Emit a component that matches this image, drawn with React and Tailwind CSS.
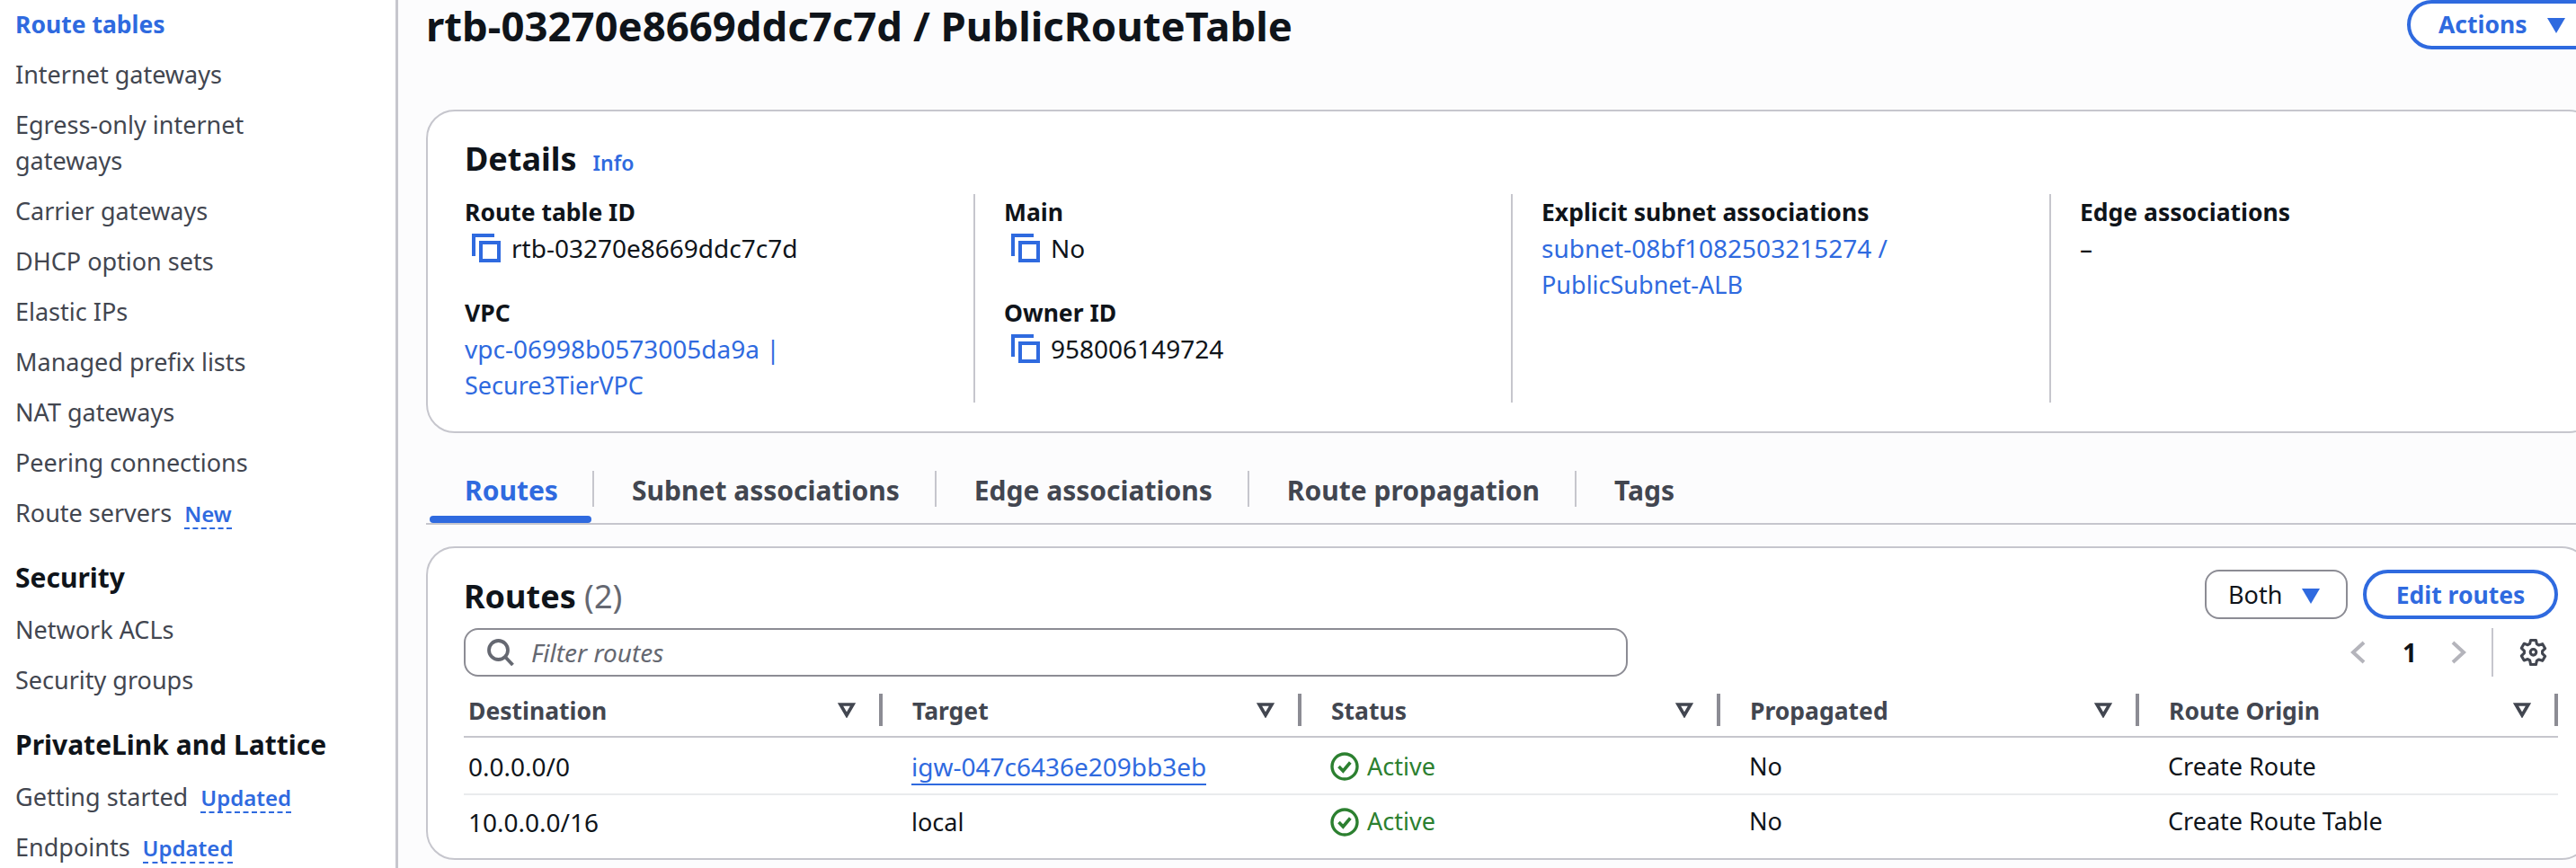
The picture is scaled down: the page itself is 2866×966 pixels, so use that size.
function Copy() {
  return (
    <svg width="32" height="32" viewBox="0 0 32 32" className="shrink-0" fill="none" stroke="#2f6adf" strokeWidth="4">
      <path d="M25 2H2V25" />
      <rect x="10" y="10" width="20" height="20" />
    </svg>
  );
}

function Caret() {
  return (
    <svg width="20" height="18" viewBox="0 0 20 18" className="shrink-0"><path d="M0 1h20L10 18z" fill="#2f6adf" /></svg>
  );
}

function SortIcon() {
  return (
    <svg width="20" height="17" viewBox="0 0 20 17" className="shrink-0" fill="none" stroke="#424650" strokeWidth="3.6"><path d="M3 2h14l-7 12z" /></svg>
  );
}

function Check() {
  return (
    <svg width="32" height="32" viewBox="0 0 32 32" fill="none" stroke="#2c8030" className="shrink-0">
      <circle cx="16" cy="16" r="14" strokeWidth="3.4" />
      <path d="M9.5 16l4.8 5 8-9.5" strokeWidth="3.6" />
    </svg>
  );
}

function Gear() {
  return (
    <svg width="31" height="32" viewBox="0 0 16 16" fill="none" stroke="#424650" strokeWidth="1.6" strokeLinejoin="round">
      <path d="M6.5 1h3l.5 2.2 1.2.7 2.1-.7 1.5 2.6-1.6 1.5v1.4l1.6 1.5-1.5 2.6-2.1-.7-1.2.7-.5 2.2h-3L6 12.6l-1.2-.7-2.1.7-1.5-2.6 1.6-1.5V7.1L1.2 5.6l1.5-2.6 2.1.7L6 3z" />
      <circle cx="8" cy="7.9" r="1.7" />
    </svg>
  );
}

const NavItem = ({ children, badge }) => (
  <div className="flex items-baseline text-[27px] leading-[40px] text-[#424650]">
    <span>{children}</span>
    {badge && (
      <span className="ml-[14px] text-[24px] leading-[30px] font-semibold text-[#2f6adf] border-b-2 border-dashed border-[#2f6adf]">{badge}</span>
    )}
  </div>
);

const Field = ({ label, children, className = "" }) => (
  <div className={className}>
    <div className="text-[26.5px] leading-[40px] font-bold text-[#0f141a]">{label}</div>
    {children}
  </div>
);

const Copyable = ({ children }) => (
  <div className="flex items-center h-[40px] pl-[8px] gap-[12px] text-[28px] leading-[40px] text-[#0f141a]">
    <Copy />
    <span>{children}</span>
  </div>
);

const Cell = ({ first, children, className = "" }) => (
  <div className={`w-[466px] shrink-0 ${first ? "pl-[5px]" : "pl-[32px]"} ${className}`}>{children}</div>
);

const headers = ["Destination", "Target", "Status", "Propagated", "Route Origin"];
const rows = [
  { dest: "0.0.0.0/0", target: "igw-047c6436e209bb3eb", link: true, origin: "Create Route", h: "h-[64px] pt-[2px] border-b-2 border-[#e9ebed]" },
  { dest: "10.0.0.0/16", target: "local", link: false, origin: "Create Route Table", h: "h-[58px] pt-[1px]" },
];

export default function App() {
  return (
    <div className="flex w-[2866px] h-[966px] overflow-hidden bg-[#fcfcfd] font-['Noto_Sans',sans-serif] antialiased">
      <aside className="w-[443px] shrink-0 h-full bg-white border-r-[3px] border-[#c6c6cd] pl-[17px] pr-[60px] overflow-hidden">
        <div className="flex flex-col gap-[16px] pt-[7px]">
          <div className="text-[26.5px] leading-[40px] font-bold text-[#2f6adf]">Route tables</div>
          <NavItem>Internet gateways</NavItem>
          <NavItem>Egress-only internet gateways</NavItem>
          <NavItem>Carrier gateways</NavItem>
          <NavItem>DHCP option sets</NavItem>
          <NavItem>Elastic IPs</NavItem>
          <NavItem>Managed prefix lists</NavItem>
          <NavItem>NAT gateways</NavItem>
          <NavItem>Peering connections</NavItem>
          <NavItem badge="New">Route servers</NavItem>
        </div>
        <div className="mt-[32px] text-[30px] leading-[40px] font-bold text-[#0f141a]">Security</div>
        <div className="flex flex-col gap-[16px] mt-[18px]">
          <NavItem>Network ACLs</NavItem>
          <NavItem>Security groups</NavItem>
        </div>
        <div className="mt-[32px] text-[30px] leading-[40px] font-bold text-[#0f141a]">PrivateLink and Lattice</div>
        <div className="flex flex-col gap-[16px] mt-[18px]">
          <NavItem badge="Updated">Getting started</NavItem>
          <NavItem badge="Updated">Endpoints</NavItem>
        </div>
      </aside>

      <main className="flex-1 min-w-0 pl-[31px] overflow-hidden">
        <div className="flex items-start justify-between h-[122px]">
          <h1 className="text-[45.5px] leading-[56px] font-bold text-[#0f141a]">rtb-03270e8669ddc7c7d / PublicRouteTable</h1>
          <button className="flex shrink-0 items-center gap-[22px] h-[55px] w-[216px] -mr-[28px] pl-[31px] rounded-[28px] border-[4px] border-[#2f6adf] bg-white text-[26.5px] font-bold text-[#2f6adf]">
            Actions <Caret />
          </button>
        </div>

        <section className="bg-white border-2 border-[#c6c6cd] -mr-[24px] rounded-[32px] h-[360px] pt-[23px] pl-[41px]">
          <div className="flex items-baseline gap-[18px] h-[60px]">
            <h2 className="text-[36px] leading-[60px] font-bold text-[#0f141a]">Details</h2>
            <span className="text-[23px] font-semibold text-[#2f6adf]">Info</span>
          </div>
          <div className="flex h-[232px] mt-[9px]">
            <div className="w-[568px] shrink-0 border-r-2 border-[#c6c6cd]">
              <Field label="Route table ID"><Copyable>rtb-03270e8669ddc7c7d</Copyable></Field>
              <Field label="VPC" className="mt-[32px]">
                <div className="text-[28px] leading-[40px] text-[#2f6adf]">vpc-06998b0573005da9a |<br /><span className="text-[27px]">Secure3TierVPC</span></div>
              </Field>
            </div>
            <div className="w-[598px] shrink-0 pl-[32px] border-r-2 border-[#c6c6cd]">
              <Field label="Main"><Copyable>No</Copyable></Field>
              <Field label="Owner ID" className="mt-[32px]"><Copyable>958006149724</Copyable></Field>
            </div>
            <div className="w-[599px] shrink-0 pl-[32px] border-r-2 border-[#c6c6cd]">
              <Field label="Explicit subnet associations">
                <div className="text-[28px] leading-[40px] text-[#2f6adf]">subnet-08bf1082503215274 /<br /><span className="text-[27px]">PublicSubnet-ALB</span></div>
              </Field>
            </div>
            <div className="pl-[32px]">
              <Field label="Edge associations">
                <div className="text-[28px] leading-[40px] text-[#0f141a]">–</div>
              </Field>
            </div>
          </div>
        </section>

        <div className="flex items-start mt-[24px] h-[78px] border-b-2 border-[#c6c6cd] text-[30px] font-bold text-[#424650]">
          <div className="relative w-[185px] shrink-0 pl-[43px] pt-[20px] text-[#2f6adf] h-full leading-[40px]">
            Routes
            <div className="absolute left-[4px] w-[180px] bottom-0 h-[8px] rounded-full bg-[#2f6adf]" />
          </div>
          {["Subnet associations", "Edge associations", "Route propagation", "Tags"].map((t) => (
            <div key={t} className="flex h-full items-start shrink-0">
              <div className="w-[2px] h-[40px] mt-[18px] bg-[#c6c6cd]" />
              <div className="pl-[42px] pr-[39px] pt-[20px] leading-[40px]">{t}</div>
            </div>
          ))}
        </div>

        <section className="mt-[24px] bg-white border-2 border-[#c6c6cd] -mr-[16px] rounded-[32px] h-[349px] pl-[40px] pr-[34px] pt-[24px]">
          <div className="flex items-start justify-between h-[65px]">
            <h2 className="text-[36px] leading-[56px] pt-[2px] font-bold text-[#0f141a]">Routes <span className="font-normal text-[#656871]">(2)</span></h2>
            <div className="flex items-center gap-[17px]">
              <button className="flex items-center justify-between h-[55px] w-[159px] pl-[24px] pr-[29px] pt-[2px] rounded-[16px] border-2 border-[#8c8c94] bg-white text-[27px] text-[#0f141a]">
                Both <Caret />
              </button>
              <button className="h-[55px] w-[217px] pt-[2px] rounded-full border-[4px] border-[#2f6adf] bg-white text-[26.5px] font-bold text-[#2f6adf]">Edit routes</button>
            </div>
          </div>
          <div className="flex items-center justify-between h-[54px]">
            <div className="flex items-center h-[54px] w-[1295px] pl-[24px] gap-[19px] rounded-[16px] border-2 border-[#8c8c94] text-[28px] italic text-[#656871]">
              <svg width="30" height="30" viewBox="0 0 30 30" fill="none" stroke="#656871" strokeWidth="3.8"><circle cx="12.5" cy="12.5" r="10.5" /><path d="M20 20l8.5 9" /></svg>
              Filter routes
            </div>
            <div className="flex items-center h-[54px] pr-[12px]">
              <svg width="17" height="26" viewBox="0 0 17 26" fill="none" stroke="#b4b4bb" strokeWidth="4"><path d="M15 2L3 13l12 11" /></svg>
              <span className="ml-[41px] mr-[38px] w-[16px] text-center text-[28px] font-bold text-[#0f141a]">1</span>
              <svg width="17" height="26" viewBox="0 0 17 26" fill="none" stroke="#b4b4bb" strokeWidth="4"><path d="M2 2l12 11L2 24" /></svg>
              <div className="ml-[28px] w-[2px] h-[54px] bg-[#c6c6cd]" />
              <div className="ml-[29px] flex"><Gear /></div>
            </div>
          </div>
          <div className="flex h-[68px] pt-[19px] border-b-2 border-[#c6c6cd] w-[2330px]">
            {headers.map((h, i) => (
              <div key={h} className={`w-[466px] shrink-0 h-[36px] flex items-center justify-between text-[26.5px] font-bold text-[#424650] ${i === 0 ? "pl-[5px]" : "pl-[33px]"}`}>
                <span className="pt-[3px]">{h}</span>
                <span className="flex items-center gap-[26px]"><SortIcon /><span className="w-[4px] h-[36px] bg-[#8c8c94]" /></span>
              </div>
            ))}
          </div>
          {rows.map((r) => (
            <div key={r.dest} className={`flex items-center w-[2330px] text-[27px] text-[#0f141a] ${r.h}`}>
              <Cell first className="text-[28px]">{r.dest}</Cell>
              <Cell className="text-[28px]">
                {r.link ? <span className="text-[#2f6adf] border-b-2 border-[#2f6adf]">{r.target}</span> : <span className="text-[27px]">{r.target}</span>}
              </Cell>
              <Cell className="flex items-center gap-[9px] text-[#2c8030]"><Check />Active</Cell>
              <Cell>No</Cell>
              <Cell>{r.origin}</Cell>
            </div>
          ))}
        </section>
      </main>
    </div>
  );
}
